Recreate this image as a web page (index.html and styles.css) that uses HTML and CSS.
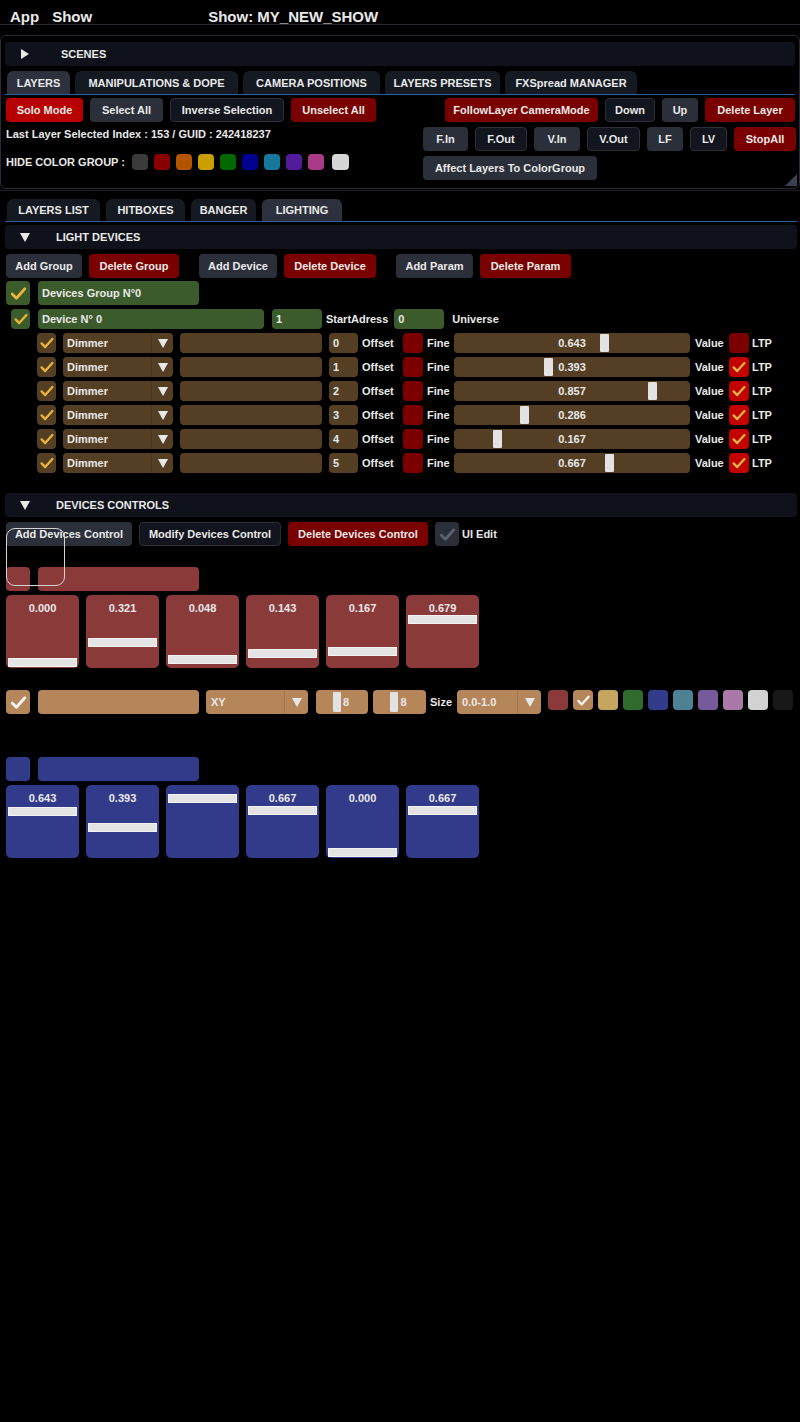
FILE: index.html
```html
<!DOCTYPE html>
<html>
<head>
<meta charset="utf-8">
<title>App Show</title>
<link rel="stylesheet" href="styles.css">
</head>
<body>
<div class="menubar">
  <span class="mi mi-app">App</span>
  <span class="mi mi-show">Show</span>
  <span class="mi mi-title">Show: MY_NEW_SHOW</span>
</div>

<div class="win">
  <div class="hdr hdr-scenes">
    <svg class="tri" width="10" height="10" viewBox="0 0 10 10"><path d="M1 0 L9 5 L1 10 Z" fill="#e8e8e8"/></svg>
    <span class="hdr-label">SCENES</span>
  </div>
  <div class="tabs">
    <div class="tab active w-t1">LAYERS</div>
    <div class="tab w-t2">MANIPULATIONS &amp; DOPE</div>
    <div class="tab w-t3">CAMERA POSITIONS</div>
    <div class="tab w-t4">LAYERS PRESETS</div>
    <div class="tab w-t5">FXSpread MANAGER</div>
  </div>
  <div class="panel">
    <div class="left">
      <div class="row">
        <div class="btn red w77">Solo Mode</div>
        <div class="btn gray w73">Select All</div>
        <div class="btn dark w114">Inverse Selection</div>
        <div class="btn dred w85">Unselect All</div>
      </div>
      <div class="info">Last Layer Selected Index : 153 / GUID : 242418237</div>
      <div class="colors">
        <span class="colors-label">HIDE COLOR GROUP :</span>
        <span class="sw c-gray"></span>
        <span class="sw c-red"></span>
        <span class="sw c-orange"></span>
        <span class="sw c-yellow"></span>
        <span class="sw c-green"></span>
        <span class="sw c-navy"></span>
        <span class="sw c-teal"></span>
        <span class="sw c-purple"></span>
        <span class="sw c-pink"></span>
        <span class="sw c-white"></span>
      </div>
    </div>
    <div class="right">
      <div class="row row-end">
        <div class="btn dred w153">FollowLayer CameraMode</div>
        <div class="btn dark w50">Down</div>
        <div class="btn gray w36">Up</div>
        <div class="btn dred w90">Delete Layer</div>
      </div>
      <div class="row">
        <div class="btn gray w45">F.In</div>
        <div class="btn dark w52">F.Out</div>
        <div class="btn gray w46">V.In</div>
        <div class="btn dark w53">V.Out</div>
        <div class="btn gray w36">LF</div>
        <div class="btn dark w37">LV</div>
        <div class="btn dred w62">StopAll</div>
      </div>
      <div class="row">
        <div class="btn gray w174">Affect Layers To ColorGroup</div>
      </div>
    </div>
  </div>
  <svg class="grip" width="12" height="12" viewBox="0 0 12 12"><path d="M12 0 L12 12 L0 12 Z" fill="#3a4152"/></svg>
</div>

<div class="win2">
  <div class="tabs tabs2">
    <div class="tab w-l1">LAYERS LIST</div>
    <div class="tab w-l2">HITBOXES</div>
    <div class="tab w-l3">BANGER</div>
    <div class="tab active w-l4">LIGHTING</div>
  </div>

  <div class="hdr hdr-sub">
    <svg class="tri" width="10" height="9" viewBox="0 0 10 9"><path d="M0 0 L10 0 L5 9 Z" fill="#e8e8e8"/></svg>
    <span class="hdr-label">LIGHT DEVICES</span>
  </div>

  <div class="row ld-btns">
    <div class="btn gray w76">Add Group</div>
    <div class="btn dred w90">Delete Group</div>
    <div class="btn gray w78 sep">Add Device</div>
    <div class="btn dred w92">Delete Device</div>
    <div class="btn gray w77 sep">Add Param</div>
    <div class="btn dred w91">Delete Param</div>
  </div>

  <div class="row grp-row">
    <div class="cb cb-green cb24"><svg viewBox="0 0 20 20"><path d="M4 10.5 L8 14.5 L16 5.5" fill="none" stroke="#e8b53a" stroke-width="2.6" stroke-linecap="round" stroke-linejoin="round"/></svg></div>
    <div class="field green w161">Devices Group N°0</div>
  </div>

  <div class="row dev-row">
    <div class="cb cb-green cb-dev"><svg viewBox="0 0 20 20"><path d="M4 10.5 L8 14.5 L16 5.5" fill="none" stroke="#e8b53a" stroke-width="2.6" stroke-linecap="round" stroke-linejoin="round"/></svg></div>
    <div class="field green w226">Device N° 0</div>
    <div class="field green w50">1</div>
    <span class="lbl lbl-start">StartAdress</span>
    <div class="field green w50">0</div>
    <span class="lbl">Universe</span>
  </div>

  <div class="params">
    <!-- row 0 -->
    <div class="cb cb-brown"><svg viewBox="0 0 20 20"><path d="M4 10.5 L8 14.5 L16 5.5" fill="none" stroke="#e8b53a" stroke-width="2.6" stroke-linecap="round" stroke-linejoin="round"/></svg></div>
    <div class="combo brown w110"><span class="combo-text">Dimmer</span><span class="combo-arrow"><svg width="10" height="9" viewBox="0 0 10 9"><path d="M0 0 L10 0 L5 9 Z" fill="#e8e8e8"/></svg></span></div>
    <div class="field brown w142"></div>
    <div class="field brown w29">0</div>
    <span class="lbl">Offset</span>
    <div class="box dred20"></div>
    <span class="lbl">Fine</span>
    <div class="slider"><span class="grab" style="left:146px"></span><span class="slider-text">0.643</span></div>
    <span class="lbl">Value</span>
    <div class="box dred20"></div>
    <span class="lbl">LTP</span>
    <!-- row 1 -->
    <div class="cb cb-brown"><svg viewBox="0 0 20 20"><path d="M4 10.5 L8 14.5 L16 5.5" fill="none" stroke="#e8b53a" stroke-width="2.6" stroke-linecap="round" stroke-linejoin="round"/></svg></div>
    <div class="combo brown w110"><span class="combo-text">Dimmer</span><span class="combo-arrow"><svg width="10" height="9" viewBox="0 0 10 9"><path d="M0 0 L10 0 L5 9 Z" fill="#e8e8e8"/></svg></span></div>
    <div class="field brown w142"></div>
    <div class="field brown w29">1</div>
    <span class="lbl">Offset</span>
    <div class="box dred20"></div>
    <span class="lbl">Fine</span>
    <div class="slider"><span class="grab" style="left:90px"></span><span class="slider-text">0.393</span></div>
    <span class="lbl">Value</span>
    <div class="box red20"><svg viewBox="0 0 20 20"><path d="M4 10.5 L8 14.5 L16 5.5" fill="none" stroke="#e8b53a" stroke-width="2.6" stroke-linecap="round" stroke-linejoin="round"/></svg></div>
    <span class="lbl">LTP</span>
    <!-- row 2 -->
    <div class="cb cb-brown"><svg viewBox="0 0 20 20"><path d="M4 10.5 L8 14.5 L16 5.5" fill="none" stroke="#e8b53a" stroke-width="2.6" stroke-linecap="round" stroke-linejoin="round"/></svg></div>
    <div class="combo brown w110"><span class="combo-text">Dimmer</span><span class="combo-arrow"><svg width="10" height="9" viewBox="0 0 10 9"><path d="M0 0 L10 0 L5 9 Z" fill="#e8e8e8"/></svg></span></div>
    <div class="field brown w142"></div>
    <div class="field brown w29">2</div>
    <span class="lbl">Offset</span>
    <div class="box dred20"></div>
    <span class="lbl">Fine</span>
    <div class="slider"><span class="grab" style="left:194px"></span><span class="slider-text">0.857</span></div>
    <span class="lbl">Value</span>
    <div class="box red20"><svg viewBox="0 0 20 20"><path d="M4 10.5 L8 14.5 L16 5.5" fill="none" stroke="#e8b53a" stroke-width="2.6" stroke-linecap="round" stroke-linejoin="round"/></svg></div>
    <span class="lbl">LTP</span>
    <!-- row 3 -->
    <div class="cb cb-brown"><svg viewBox="0 0 20 20"><path d="M4 10.5 L8 14.5 L16 5.5" fill="none" stroke="#e8b53a" stroke-width="2.6" stroke-linecap="round" stroke-linejoin="round"/></svg></div>
    <div class="combo brown w110"><span class="combo-text">Dimmer</span><span class="combo-arrow"><svg width="10" height="9" viewBox="0 0 10 9"><path d="M0 0 L10 0 L5 9 Z" fill="#e8e8e8"/></svg></span></div>
    <div class="field brown w142"></div>
    <div class="field brown w29">3</div>
    <span class="lbl">Offset</span>
    <div class="box dred20"></div>
    <span class="lbl">Fine</span>
    <div class="slider"><span class="grab" style="left:66px"></span><span class="slider-text">0.286</span></div>
    <span class="lbl">Value</span>
    <div class="box red20"><svg viewBox="0 0 20 20"><path d="M4 10.5 L8 14.5 L16 5.5" fill="none" stroke="#e8b53a" stroke-width="2.6" stroke-linecap="round" stroke-linejoin="round"/></svg></div>
    <span class="lbl">LTP</span>
    <!-- row 4 -->
    <div class="cb cb-brown"><svg viewBox="0 0 20 20"><path d="M4 10.5 L8 14.5 L16 5.5" fill="none" stroke="#e8b53a" stroke-width="2.6" stroke-linecap="round" stroke-linejoin="round"/></svg></div>
    <div class="combo brown w110"><span class="combo-text">Dimmer</span><span class="combo-arrow"><svg width="10" height="9" viewBox="0 0 10 9"><path d="M0 0 L10 0 L5 9 Z" fill="#e8e8e8"/></svg></span></div>
    <div class="field brown w142"></div>
    <div class="field brown w29">4</div>
    <span class="lbl">Offset</span>
    <div class="box dred20"></div>
    <span class="lbl">Fine</span>
    <div class="slider"><span class="grab" style="left:39px"></span><span class="slider-text">0.167</span></div>
    <span class="lbl">Value</span>
    <div class="box red20"><svg viewBox="0 0 20 20"><path d="M4 10.5 L8 14.5 L16 5.5" fill="none" stroke="#e8b53a" stroke-width="2.6" stroke-linecap="round" stroke-linejoin="round"/></svg></div>
    <span class="lbl">LTP</span>
    <!-- row 5 -->
    <div class="cb cb-brown"><svg viewBox="0 0 20 20"><path d="M4 10.5 L8 14.5 L16 5.5" fill="none" stroke="#e8b53a" stroke-width="2.6" stroke-linecap="round" stroke-linejoin="round"/></svg></div>
    <div class="combo brown w110"><span class="combo-text">Dimmer</span><span class="combo-arrow"><svg width="10" height="9" viewBox="0 0 10 9"><path d="M0 0 L10 0 L5 9 Z" fill="#e8e8e8"/></svg></span></div>
    <div class="field brown w142"></div>
    <div class="field brown w29">5</div>
    <span class="lbl">Offset</span>
    <div class="box dred20"></div>
    <span class="lbl">Fine</span>
    <div class="slider"><span class="grab" style="left:151px"></span><span class="slider-text">0.667</span></div>
    <span class="lbl">Value</span>
    <div class="box red20"><svg viewBox="0 0 20 20"><path d="M4 10.5 L8 14.5 L16 5.5" fill="none" stroke="#e8b53a" stroke-width="2.6" stroke-linecap="round" stroke-linejoin="round"/></svg></div>
    <span class="lbl">LTP</span>
  </div>

  <div class="hdr hdr-sub hdr-dc">
    <svg class="tri" width="10" height="9" viewBox="0 0 10 9"><path d="M0 0 L10 0 L5 9 Z" fill="#e8e8e8"/></svg>
    <span class="hdr-label">DEVICES CONTROLS</span>
  </div>

  <div class="row dc-btns">
    <div class="btn gray w126">Add Devices Control</div>
    <div class="btn dark w142">Modify Devices Control</div>
    <div class="btn dred w140">Delete Devices Control</div>
    <div class="cb cb-gray cb24"><svg viewBox="0 0 20 20"><path d="M4 10.5 L8 14.5 L16 5.5" fill="none" stroke="#5b606c" stroke-width="2.6" stroke-linecap="round" stroke-linejoin="round"/></svg></div>
    <span class="lbl lbl-ui">UI Edit</span>
    <div class="focus-ring"></div>
  </div>

  <div class="row ghead ghead-red">
    <div class="gbox"></div>
    <div class="gbar"></div>
  </div>
  <div class="tiles tiles-red">
    <div class="tile"><span class="tile-val">0.000</span><span class="tile-bar" style="top:63px"></span></div>
    <div class="tile"><span class="tile-val">0.321</span><span class="tile-bar" style="top:43px"></span></div>
    <div class="tile"><span class="tile-val">0.048</span><span class="tile-bar" style="top:60px"></span></div>
    <div class="tile"><span class="tile-val">0.143</span><span class="tile-bar" style="top:54px"></span></div>
    <div class="tile"><span class="tile-val">0.167</span><span class="tile-bar" style="top:52px"></span></div>
    <div class="tile"><span class="tile-val">0.679</span><span class="tile-bar" style="top:20px"></span></div>
  </div>

  <div class="row tan-row">
    <div class="cb cb-tan cb24"><svg viewBox="0 0 20 20"><path d="M4 10.5 L8 14.5 L16 5.5" fill="none" stroke="#f2f2f2" stroke-width="2.8" stroke-linecap="round" stroke-linejoin="round"/></svg></div>
    <div class="field tan w161 tan-name"></div>
    <div class="combo tan w102"><span class="combo-text">XY</span><span class="combo-arrow"><svg width="10" height="9" viewBox="0 0 10 9"><path d="M0 0 L10 0 L5 9 Z" fill="#e8e8e8"/></svg></span></div>
    <div class="mini tan w52"><span class="grab" style="left:17px"></span><span class="slider-text">8</span></div>
    <div class="mini tan w53"><span class="grab" style="left:17px"></span><span class="slider-text">8</span></div>
    <span class="lbl lbl-size">Size</span>
    <div class="combo tan w84"><span class="combo-text">0.0-1.0</span><span class="combo-arrow"><svg width="10" height="9" viewBox="0 0 10 9"><path d="M0 0 L10 0 L5 9 Z" fill="#e8e8e8"/></svg></span></div>
    <div class="pal">
      <span class="psw p-red"></span>
      <span class="psw p-tan"><svg viewBox="0 0 20 20"><path d="M4 10.5 L8 14.5 L16 5.5" fill="none" stroke="#f2f2f2" stroke-width="2.8" stroke-linecap="round" stroke-linejoin="round"/></svg></span>
      <span class="psw p-gold"></span>
      <span class="psw p-green"></span>
      <span class="psw p-blue"></span>
      <span class="psw p-teal"></span>
      <span class="psw p-purple"></span>
      <span class="psw p-pink"></span>
      <span class="psw p-white"></span>
      <span class="psw p-black"></span>
    </div>
  </div>

  <div class="row ghead ghead-blue">
    <div class="gbox"></div>
    <div class="gbar"></div>
  </div>
  <div class="tiles tiles-blue">
    <div class="tile"><span class="tile-val">0.643</span><span class="tile-bar" style="top:22px"></span></div>
    <div class="tile"><span class="tile-val">0.393</span><span class="tile-bar" style="top:38px"></span></div>
    <div class="tile"><span class="tile-val">0.857</span><span class="tile-bar" style="top:9px"></span></div>
    <div class="tile"><span class="tile-val">0.667</span><span class="tile-bar" style="top:21px"></span></div>
    <div class="tile"><span class="tile-val">0.000</span><span class="tile-bar" style="top:63px"></span></div>
    <div class="tile"><span class="tile-val">0.667</span><span class="tile-bar" style="top:21px"></span></div>
  </div>
</div>
</body>
</html>
```

FILE: styles.css
```css
* { box-sizing: border-box; }

body {
  margin: 0;
  width: 800px;
  height: 1422px;
  overflow: hidden;
  background: #000;
  color: #e9e9e9;
  font-family: "Liberation Sans", Arial, sans-serif;
  font-weight: bold;
  font-size: 11px;
  line-height: 14px;
}

/* ---------- menu bar ---------- */
.menubar {
  height: 25px;
  border-bottom: 1px solid #2a2a34;
  display: flex;
  padding-top: 9px;
  font-size: 15px;
  line-height: 16px;
}
.mi-app { margin-left: 10px; }
.mi-show { margin-left: 13px; }
.mi-title { margin-left: 116px; }

/* ---------- windows ---------- */
.win {
  position: relative;
  margin-top: 10px;
  height: 154px;
  border: 1px solid #2a2a38;
  border-radius: 6px;
  padding: 6px 4px 0 4px;
}
.grip {
  position: absolute;
  right: 2px;
  bottom: 2px;
}
.win2 {
  margin-top: 1px;
  border-top: 1px solid #1d1d26;
  padding: 8px 3px 0 5px;
}

/* ---------- collapsing headers ---------- */
.hdr {
  height: 24px;
  background: #0f121a;
  border-radius: 4px;
  display: flex;
  align-items: center;
}
.hdr .tri { margin-left: 15px; flex: none; }
.hdr-label { margin-left: 31px; }
.hdr-sub .hdr-label { margin-left: 26px; }
.hdr-sub { margin-top: 3px; }
.hdr-dc { margin-top: 20px; }

/* ---------- tabs ---------- */
.tabs {
  display: flex;
  gap: 5px;
  padding-left: 2px;
  margin-top: 5px;
  border-bottom: 1px solid #2f5d9c;
}
.tab {
  height: 23px;
  background: #151922;
  border-radius: 6px 6px 0 0;
  display: flex;
  align-items: center;
  justify-content: center;
}
.tab.active { background: #2c313d; }
.tabs2 { margin-top: 0; gap: 6px; }
.tabs2 .tab { height: 22px; }

.w-t1 { width: 63px; }
.w-t2 { width: 163px; }
.w-t3 { width: 137px; }
.w-t4 { width: 115px; }
.w-t5 { width: 132px; }
.w-l1 { width: 93px; }
.w-l2 { width: 79px; }
.w-l3 { width: 65px; }
.w-l4 { width: 80px; }

/* ---------- layer panel ---------- */
.panel {
  display: flex;
  justify-content: space-between;
  padding: 3px 0 0 1px;
}
.row {
  display: flex;
  align-items: center;
  gap: 7px;
}
.right {
  width: 372px;
  display: flex;
  flex-direction: column;
  gap: 4px;
}
.right .row + .row { margin-top: 1px; }
.row-end { justify-content: flex-end; }
.info {
  margin-top: 4px;
  line-height: 16px;
}
.colors {
  margin-top: 12px;
  display: flex;
  align-items: center;
  gap: 6px;
}
.colors-label { margin-right: 1px; }
.sw {
  width: 16px;
  height: 16px;
  border-radius: 4px;
}
.c-gray { background: #3b3b3b; }
.c-red { background: #8a0000; }
.c-orange { background: #b35500; }
.c-yellow { background: #c9a000; }
.c-green { background: #006800; }
.c-navy { background: #00008f; }
.c-teal { background: #16789c; }
.c-purple { background: #521b9c; }
.c-pink { background: #a83a88; }
.c-white { background: #d6d6d6; width: 17px; margin-left: 2px; }

/* ---------- buttons ---------- */
.btn {
  height: 24px;
  border-radius: 4px;
  display: flex;
  align-items: center;
  justify-content: center;
  white-space: nowrap;
  flex: none;
}
.gray { background: #2b2f3a; }
.dark { background: #12151d; border: 1px solid #2b2f3a; }
.red { background: #b80000; }
.dred { background: #7a0000; }
.sep { margin-left: 13px; }

.w29 { width: 29px; }
.w36 { width: 36px; }
.w37 { width: 37px; }
.w45 { width: 45px; }
.w46 { width: 46px; }
.w50 { width: 50px; }
.w52 { width: 52px; }
.w53 { width: 53px; }
.w62 { width: 62px; }
.w73 { width: 73px; }
.w76 { width: 76px; }
.w77 { width: 77px; }
.w78 { width: 78px; }
.w84 { width: 84px; }
.w85 { width: 85px; }
.w90 { width: 90px; }
.w91 { width: 91px; }
.w92 { width: 92px; }
.w102 { width: 102px; }
.w110 { width: 110px; }
.w114 { width: 114px; }
.w126 { width: 126px; }
.w140 { width: 140px; }
.w142 { width: 142px; }
.w153 { width: 153px; }
.w161 { width: 161px; }
.w174 { width: 174px; }
.w226 { width: 226px; }

/* ---------- light devices ---------- */
.ld-btns { margin-top: 5px; padding-left: 1px; }
.grp-row { margin-top: 3px; padding-left: 1px; gap: 8px; }
.dev-row { margin-top: 4px; padding-left: 6px; height: 20px; gap: 8px; }

.cb {
  width: 20px;
  height: 20px;
  border-radius: 4px;
  display: flex;
  align-items: center;
  justify-content: center;
  flex: none;
}
.cb svg { width: 18px; height: 18px; }
.cb24 { width: 24px; height: 24px; }
.cb24 svg { width: 21px; height: 21px; }
.cb-dev { width: 19px; }
.cb-green { background: #3c5b2d; }
.cb-brown { background: #553f24; }
.cb-gray { background: #2b2f3a; }
.cb-tan { background: #b5865a; }

.field {
  height: 100%;
  border-radius: 4px;
  display: flex;
  align-items: center;
  padding-left: 4px;
  flex: none;
  white-space: nowrap;
}
.grp-row .field { height: 24px; }
.dev-row .field { height: 20px; }
.green { background: #3c5b2d; }
.brown { background: #553f24; }
.tan { background: #b5865a; }

.lbl { white-space: nowrap; }
.dev-row .lbl-start { margin-left: -4px; margin-right: -2px; }

.params {
  margin-top: 4px;
  padding-left: 32px;
  display: grid;
  grid-template-columns: 26px 117px 149px 33px 41px 24px 27px 241px 34px 23px auto;
  grid-auto-rows: 20px;
  row-gap: 4px;
  align-items: center;
}
.params .field { height: 20px; }
.params .cb { width: 19px; }

.combo {
  height: 20px;
  border-radius: 4px;
  display: flex;
  align-items: center;
  flex: none;
  overflow: hidden;
}
.combo-text { flex: 1; padding-left: 4px; }
.combo-arrow {
  width: 22px;
  height: 100%;
  display: flex;
  align-items: center;
  justify-content: center;
  border-left: 1px solid rgba(0, 0, 0, 0.12);
}
.tan-row .combo { height: 24px; }
.tan-row .combo-arrow { width: 24px; }
.tan-row .combo-text { padding-left: 5px; }

.box {
  width: 20px;
  height: 20px;
  border-radius: 4px;
  display: flex;
  align-items: center;
  justify-content: center;
}
.box svg { width: 18px; height: 18px; }
.dred20 { background: #7a0000; }
.red20 { background: #c20000; }

.slider {
  position: relative;
  width: 236px;
  height: 20px;
  background: #553f24;
  border-radius: 4px;
  display: flex;
  align-items: center;
  justify-content: center;
}
.grab {
  position: absolute;
  top: 1px;
  width: 9px;
  height: 18px;
  background: #e2e2e2;
  border-radius: 1px;
}
.slider-text { position: relative; }

/* ---------- devices controls ---------- */
.dc-btns { margin-top: 5px; padding-left: 1px; position: relative; }
.lbl-ui { margin-left: -4px; }
.focus-ring {
  position: absolute;
  left: 1px;
  top: 6px;
  width: 59px;
  height: 58px;
  border: 1.5px solid #d4d4d4;
  border-radius: 9px;
  pointer-events: none;
}

.ghead { margin-top: 21px; padding-left: 1px; gap: 8px; }
.ghead-blue { margin-top: 43px; }
.gbox { width: 24px; height: 24px; border-radius: 4px; }
.gbar { width: 161px; height: 24px; border-radius: 4px; }
.ghead-red .gbox, .ghead-red .gbar { background: #8b3a3a; }
.ghead-blue .gbox, .ghead-blue .gbar { background: #323b8a; }

.tiles {
  margin-top: 4px;
  padding-left: 1px;
  display: flex;
  gap: 7px;
}
.tile {
  position: relative;
  width: 73px;
  height: 73px;
  border-radius: 5px;
  display: flex;
  justify-content: center;
  padding-top: 6px;
}
.tiles-red .tile { background: #8b3a3a; }
.tiles-blue .tile { background: #323b8a; }
.tile-bar {
  position: absolute;
  left: 2px;
  right: 2px;
  height: 9px;
  background: #e4e4e4;
  border: 1px solid #f4f4f4;
}

.tan-row { margin-top: 22px; padding-left: 1px; height: 24px; }
.tan-row .field { height: 24px; }
.tan-name { margin-left: 1px; }
.mini {
  position: relative;
  height: 24px;
  border-radius: 4px;
  display: flex;
  align-items: center;
  justify-content: center;
  padding-left: 8px;
  margin-left: 1px;
  flex: none;
}
.mini + .mini { margin-left: -2px; }
.mini .grab { top: 2px; width: 8px; height: 20px; }
.lbl-size { margin-left: -3px; margin-right: -2px; }
.pal {
  display: flex;
  gap: 5px;
  align-self: flex-start;
}
.psw {
  width: 20px;
  height: 20px;
  border-radius: 4px;
  display: flex;
  align-items: center;
  justify-content: center;
}
.psw svg { width: 17px; height: 17px; }
.p-red { background: #8b3a3a; }
.p-tan { background: #b5865a; }
.p-gold { background: #c4a661; }
.p-green { background: #2f6b2c; }
.p-blue { background: #323b8a; }
.p-teal { background: #4e8193; }
.p-purple { background: #775a9c; }
.p-pink { background: #a97aa7; }
.p-white { background: #d2d2d2; }
.p-black { background: #181818; }
```
